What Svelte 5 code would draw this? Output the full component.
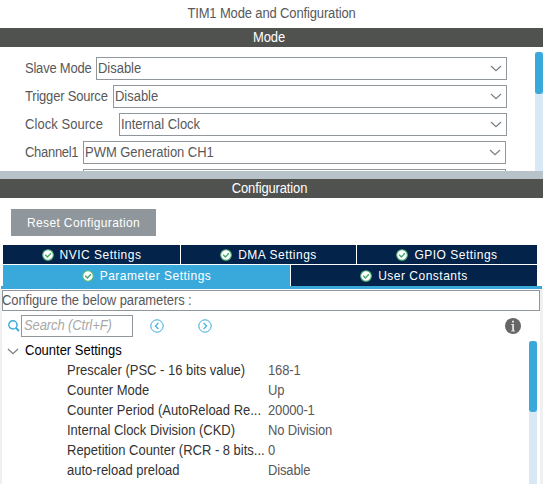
<script>
  const modes = [
    { label: 'Slave Mode', value: 'Disable', left: 71, end: 36, spacing: -0.22 },
    { label: 'Trigger Source', value: 'Disable', left: 88, end: 36, spacing: -0.2 },
    { label: 'Clock Source', value: 'Internal Clock', left: 94, end: 36, spacing: 0.05 },
    { label: 'Channel1', value: 'PWM Generation CH1', left: 58, end: 37, spacing: -0.3 },
    { label: '', value: '', left: 58, end: 37, spacing: 0 }
  ];
  const params = [
    ['Prescaler (PSC - 16 bits value)', '168-1'],
    ['Counter Mode', 'Up'],
    ['Counter Period (AutoReload Re...', '20000-1'],
    ['Internal Clock Division (CKD)', 'No Division'],
    ['Repetition Counter (RCR - 8 bits...', '0'],
    ['auto-reload preload', 'Disable']
  ];
</script>

{#snippet check()}
  <svg class="check" width="12" height="12" viewBox="0 0 12 12">
    <circle cx="6" cy="6" r="5.3" fill="#fff" stroke="#58b77c" stroke-width="1.1" />
    <path d="M3.2 5.8 5.4 8 8.9 4.2" fill="none" stroke="#3fa568" stroke-width="1.3" />
  </svg>
{/snippet}

{#snippet chevron()}
  <svg class="chevron" width="12" height="7" viewBox="0 0 12 7">
    <path d="M1 1 6 5.7 11 1" fill="none" stroke="#7b7e80" stroke-width="1.2" />
  </svg>
{/snippet}

<main>
  <h1><span>TIM1 Mode and Configuration</span></h1>
  <h2><span>Mode</span></h2>
  <section class="mode">
    <div class="rows">
      {#each modes as m}
        <div class="row" style:padding-right="{m.end}px">
          <label style:width="{m.left}px" style:letter-spacing="{m.spacing}px"><span>{m.label}</span></label>
          <div class="select"><span>{m.value}</span>{@render chevron()}</div>
        </div>
      {/each}
    </div>
    <div class="track top"><i></i></div>
  </section>
  <div class="splitter"></div>
  <h2 class="conf"><span>Configuration</span></h2>
  <button><span>Reset Configuration</span></button>

  <nav>
    <div class="tabs first">
      <div class="tab">{@render check()}<span>NVIC Settings</span></div>
      <div class="tab">{@render check()}<span>DMA Settings</span></div>
      <div class="tab">{@render check()}<span>GPIO Settings</span></div>
    </div>
    <div class="tabs second">
      <div class="tab active">{@render check()}<span>Parameter Settings</span></div>
      <div class="tab">{@render check()}<span>User Constants</span></div>
    </div>
  </nav>
  <div class="underline"></div>

  <section class="panel">
    <div class="note"><span>Configure the below parameters :</span></div>
    <div class="tools">
      <svg class="lens" width="12" height="12" viewBox="0 0 12 12" fill="none" stroke="#39a9dc">
        <circle cx="4.9" cy="4.9" r="4.1" stroke-width="1.4" /><path d="M7.8 7.8 11 11" stroke-width="1.9" />
      </svg>
      <div class="search"><span>Search (Ctrl+F)</span></div>
      <svg class="prev" width="14" height="14" viewBox="0 0 14 14" fill="none" stroke="#39a9dc">
        <circle cx="7" cy="7" r="6.2" /><path d="M8.4 3.8 5.4 7 8.4 10.2" stroke-width="1.2" />
      </svg>
      <svg class="next" width="14" height="14" viewBox="0 0 14 14" fill="none" stroke="#39a9dc">
        <circle cx="7" cy="7" r="6.2" /><path d="M5.6 3.8 8.6 7 5.6 10.2" stroke-width="1.2" />
      </svg>
      <svg class="info" width="16" height="16" viewBox="0 0 16 16">
        <circle cx="8" cy="8" r="8" fill="#666" />
        <path d="M7 2.8h2v1.7H7zM6.2 6H9v6.5h1v.9H6.2v-.9h1V6.9h-1z" fill="#e4e4e4" />
      </svg>
    </div>
    <div class="body">
      <div class="tree">
        <div class="group">{@render chevron()}<span>Counter Settings</span></div>
        {#each params as [name, value]}
          <div class="param"><span class="name">{name}</span><span class="value">{value}</span></div>
        {/each}
      </div>
      <div class="track"><i></i></div>
    </div>
  </section>
</main>

<style>
  :global(body) { margin: 0; background: #fff; overflow: hidden; }
  main {
    width: 543px; height: 484px; overflow: hidden; display: flex; flex-direction: column;
    font: 13px/19px "Liberation Sans", Arial, sans-serif; color: #58595b; background: #fff;
    white-space: nowrap;
  }
  svg { display: block; flex: none; }
  span { display: inline-block; transform: scaleY(1.08); transform-origin: 0 50%; }
  h1, h2 { margin: 0; font-size: 13px; font-weight: 400; text-align: center; flex: none; letter-spacing: -0.14px; }
  h1 { height: 28px; line-height: 27px; }
  h2 { height: 19px; background: #50524f; color: #fff; padding-right: 5px; }
  .conf { padding-right: 4px; }
  .mode { height: 124px; display: flex; overflow: hidden; flex: none; }
  .rows { flex: 1; padding: 10px 0 0 25px; }
  .row { display: flex; height: 23px; margin-bottom: 5px; margin-right: -8px; }
  .row label { line-height: 23px; flex: none; }
  .select {
    flex: 1; display: flex; justify-content: space-between; align-items: center;
    border: 1px solid #8f969c; padding: 0 4px 0 1px; box-sizing: border-box; letter-spacing: -0.03px;
  }
  .track { width: 8px; background: #d9e8f5; flex: none; }
  .track i { display: block; height: 71px; background: #39a9dc; border-radius: 3px; }
  .top { margin-top: 5px; }
  .top i { height: 42px; }
  .splitter { height: 8px; background: #b7c3c9; flex: none; }
  button {
    width: 145px; height: 27px; margin: 11px 0 9px 11px; padding: 0; border: 0; flex: none;
    background: #8f979c; color: #fff; font: inherit; font-size: 12px; letter-spacing: 0.37px;
  }
  nav { padding: 0 6px 0 3px; flex: none; color: #fff; font-size: 12px; letter-spacing: 0.5px; }
  button span, nav span { transform: translateY(1px) scaleY(1.14); transform-origin: 0 70%; }
  .tabs { display: grid; gap: 1px; }
  .first { grid-template-columns: 177px 175px 1fr; height: 19px; margin-bottom: 1px; }
  .second { grid-template-columns: 287px 1fr; height: 21px; }
  .tab { display: flex; justify-content: center; align-items: center; gap: 6px; background: #03234b; }
  .active { background: #39a9dc; }
  .underline { height: 3px; margin: 0 1px; background: #39a9dc; flex: none; }
  .panel {
    flex: 1; display: flex; flex-direction: column; padding-top: 1px;
    border-left: 2px solid #f0f0f0; border-right: 3px solid #f0f0f0;
  }
  .note { height: 21px; box-sizing: border-box; border: 1px solid #8f969c; letter-spacing: -0.08px; }
  .note span { margin-left: -1px; }
  .tools { display: flex; align-items: center; height: 22px; margin-top: 4px; padding: 0 19px 0 6px; }
  .search {
    width: 112px; height: 22px; box-sizing: border-box; margin-left: 1px; padding-left: 2px;
    border: 1px solid #8f969c; color: #a8a8a8; font-style: italic; line-height: 20px; letter-spacing: -0.1px;
  }
  .prev { margin-left: 17px; }
  .next { margin-left: 34px; }
  .info { margin-left: auto; }
  .body { flex: 1; display: flex; margin-top: 4px; padding-right: 3px; }
  .tree { flex: 1; line-height: 20px; letter-spacing: -0.01px; }
  .group { display: flex; align-items: center; height: 20px; color: #000; padding-left: 5px; gap: 6px; }
  .param { display: flex; height: 20px; padding-left: 65px; }
  .name { width: 201px; color: #333; flex: none; }
  .value { letter-spacing: -0.15px; }
</style>
